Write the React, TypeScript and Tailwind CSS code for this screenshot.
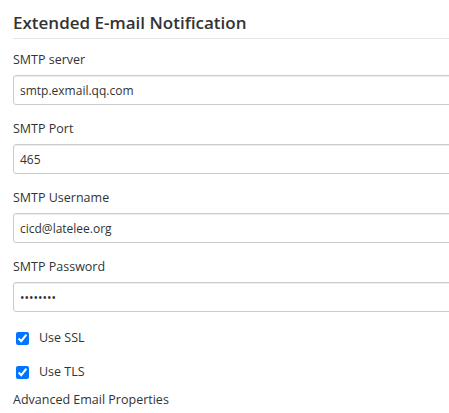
import React from 'react';

const font = { fontFamily: '"Open Sans", "Noto Sans", sans-serif' };

function Field({ label, value, type = 'text' }: { label: string; value: string; type?: string }) {
  return (
    <div className="flex flex-col">
      <label className="h-[20px] text-[12.5px] leading-[20px] text-[#333]">{label}</label>
      <input
        type={type}
        defaultValue={value}
        readOnly
        className="mt-[5px] h-[30px] w-[480px] rounded-[3px] border border-[#ccc] bg-white px-[6px] text-[12px] text-[#333] shadow-[inset_0_1px_1px_rgba(0,0,0,0.075)] outline-none"
        style={font}
      />
    </div>
  );
}

export default function App() {
  return (
    <div className="h-[413px] w-[449px] overflow-hidden bg-white text-[#333]" style={font}>
      <div className="pl-[13px]">
        <h2 className="pt-[11px] text-[17px] leading-[24px] font-semibold text-[#333]">Extended E-mail Notification</h2>
        <div className="mt-[3px] border-b border-[#e5e5e5]" />
        <div className="mt-[11px] flex flex-col gap-[14px]">
          <Field label="SMTP server" value="smtp.exmail.qq.com" />
          <Field label="SMTP Port" value="465" />
          <Field label="SMTP Username" value="cicd@latelee.org" />
          <Field label="SMTP Password" value="12345678" type="password" />
        </div>
        <div className="mt-[16px] flex flex-col gap-[14px] pl-[3px]">
          <label className="flex items-center gap-[10px] text-[12.5px] leading-[20px]">
            <input type="checkbox" defaultChecked className="m-0 h-[13px] w-[13px] accent-[#0075ff]" />
            Use SSL
          </label>
          <label className="flex items-center gap-[10px] text-[12.5px] leading-[20px]">
            <input type="checkbox" defaultChecked className="m-0 h-[13px] w-[13px] accent-[#0075ff]" />
            Use TLS
          </label>
        </div>
        <div className="mt-[8px] text-[12.5px] leading-[20px]">Advanced Email Properties</div>
      </div>
    </div>
  );
}
